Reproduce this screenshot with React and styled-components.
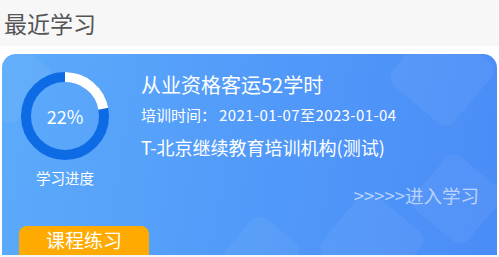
import styled, { createGlobalStyle } from "styled-components";

const GlobalStyle = createGlobalStyle`
  body {
    margin: 0;
    background: #f5f5f5;
    font-family: "Noto Sans CJK SC", "Noto Sans", sans-serif;
  }
`;

const SectionTitle = styled.h2`
  margin: 0;
  height: 46px;
  line-height: 46px;
  padding-left: 4px;
  font-size: 23px;
  font-weight: 400;
  color: #555;
  background: #f7f7f7;
`;

const Wrapper = styled.div`
  background: #fff;
  padding: 8px 2px 0;
`;

const Card = styled.div`
  position: relative;
  height: 201px;
  box-sizing: border-box;
  padding: 18px 18px 0 17px;
  border-radius: 14px 14px 0 0;
  overflow: hidden;
  background: linear-gradient(100deg, #5cabfb 0%, #5199f9 55%, #4a8cf7 100%);
  color: #fff;
`;

const Decor = styled.div`
  position: absolute;
  width: ${({ $size }) => $size}px;
  height: ${({ $size }) => $size}px;
  left: ${({ $x }) => $x}px;
  top: ${({ $y }) => $y}px;
  border-radius: 12px;
  background: rgba(255, 255, 255, 0.05);
  transform: rotate(40deg);
  pointer-events: none;
`;

const Top = styled.div`
  position: relative;
  display: flex;
  gap: 32px;
`;

const Progress = styled.div`
  width: 88px;
  margin-left: 2px;
  display: flex;
  flex-direction: column;
  align-items: center;
`;

const Ring = styled.div`
  position: relative;
  width: 88px;
  height: 88px;
`;

const Percent = styled.span`
  position: absolute;
  inset: 0;
  display: flex;
  align-items: center;
  justify-content: center;
  font-size: 18px;
`;

const ProgressLabel = styled.div`
  margin-top: 9px;
  font-size: 14.5px;
  line-height: 18px;
`;

const Info = styled.div`
  flex: 1;
  display: flex;
  flex-direction: column;
`;

const CourseName = styled.div`
  font-size: 20px;
  line-height: 26px;
`;

const Period = styled.div`
  margin-top: 6px;
  font-size: 15px;
  line-height: 22px;
`;

const Dates = styled.span`
  margin-left: 3px;
  letter-spacing: 0.4px;
`;

const Org = styled.div`
  margin-top: 9px;
  font-size: 18px;
  line-height: 24px;
`;

const EnterLink = styled.a`
  margin-top: 24px;
  align-self: flex-end;
  font-size: 18.5px;
  line-height: 24px;
  color: rgba(255, 255, 255, 0.6);
  text-decoration: none;
  cursor: pointer;
`;

const PracticeButton = styled.button`
  position: relative;
  display: block;
  margin-top: 19px;
  width: 130px;
  height: 40px;
  padding: 0 0 12px;
  border: none;
  border-radius: 8px;
  background: #ffaa00;
  color: #fff;
  font-family: inherit;
  font-size: 19px;
  line-height: 28px;
  cursor: pointer;
`;

function ProgressRing({ value }) {
  const r = 39;
  const c = 2 * Math.PI * r;
  return (
    <Ring>
      <svg width="88" height="88" viewBox="0 0 88 88">
        <circle cx="44" cy="44" r={r} fill="none" stroke="#0e6be6" strokeWidth="10" />
        <circle
          cx="44"
          cy="44"
          r={r}
          fill="none"
          stroke="#fff"
          strokeWidth="10"
          strokeDasharray={`${(c * value) / 100} ${c}`}
          transform="rotate(-90 44 44)"
        />
      </svg>
      <Percent>{value}%</Percent>
    </Ring>
  );
}

export default function App() {
  return (
    <>
      <GlobalStyle />
      <SectionTitle>最近学习</SectionTitle>
      <Wrapper>
        <Card>
          <Decor $size={70} $x={-30} $y={-10} />
          <Decor $size={80} $x={400} $y={-20} />
          <Decor $size={70} $x={420} $y={110} />
          <Decor $size={80} $x={330} $y={150} />
          <Decor $size={60} $x={230} $y={170} />
          <Top>
            <Progress>
              <ProgressRing value={22} />
              <ProgressLabel>学习进度</ProgressLabel>
            </Progress>
            <Info>
              <CourseName>从业资格客运52学时</CourseName>
              <Period>
                培训时间：<Dates>2021-01-07至2023-01-04</Dates>
              </Period>
              <Org>T-北京继续教育培训机构(测试)</Org>
              <EnterLink>&gt;&gt;&gt;&gt;&gt;进入学习</EnterLink>
            </Info>
          </Top>
          <PracticeButton>课程练习</PracticeButton>
        </Card>
      </Wrapper>
    </>
  );
}
